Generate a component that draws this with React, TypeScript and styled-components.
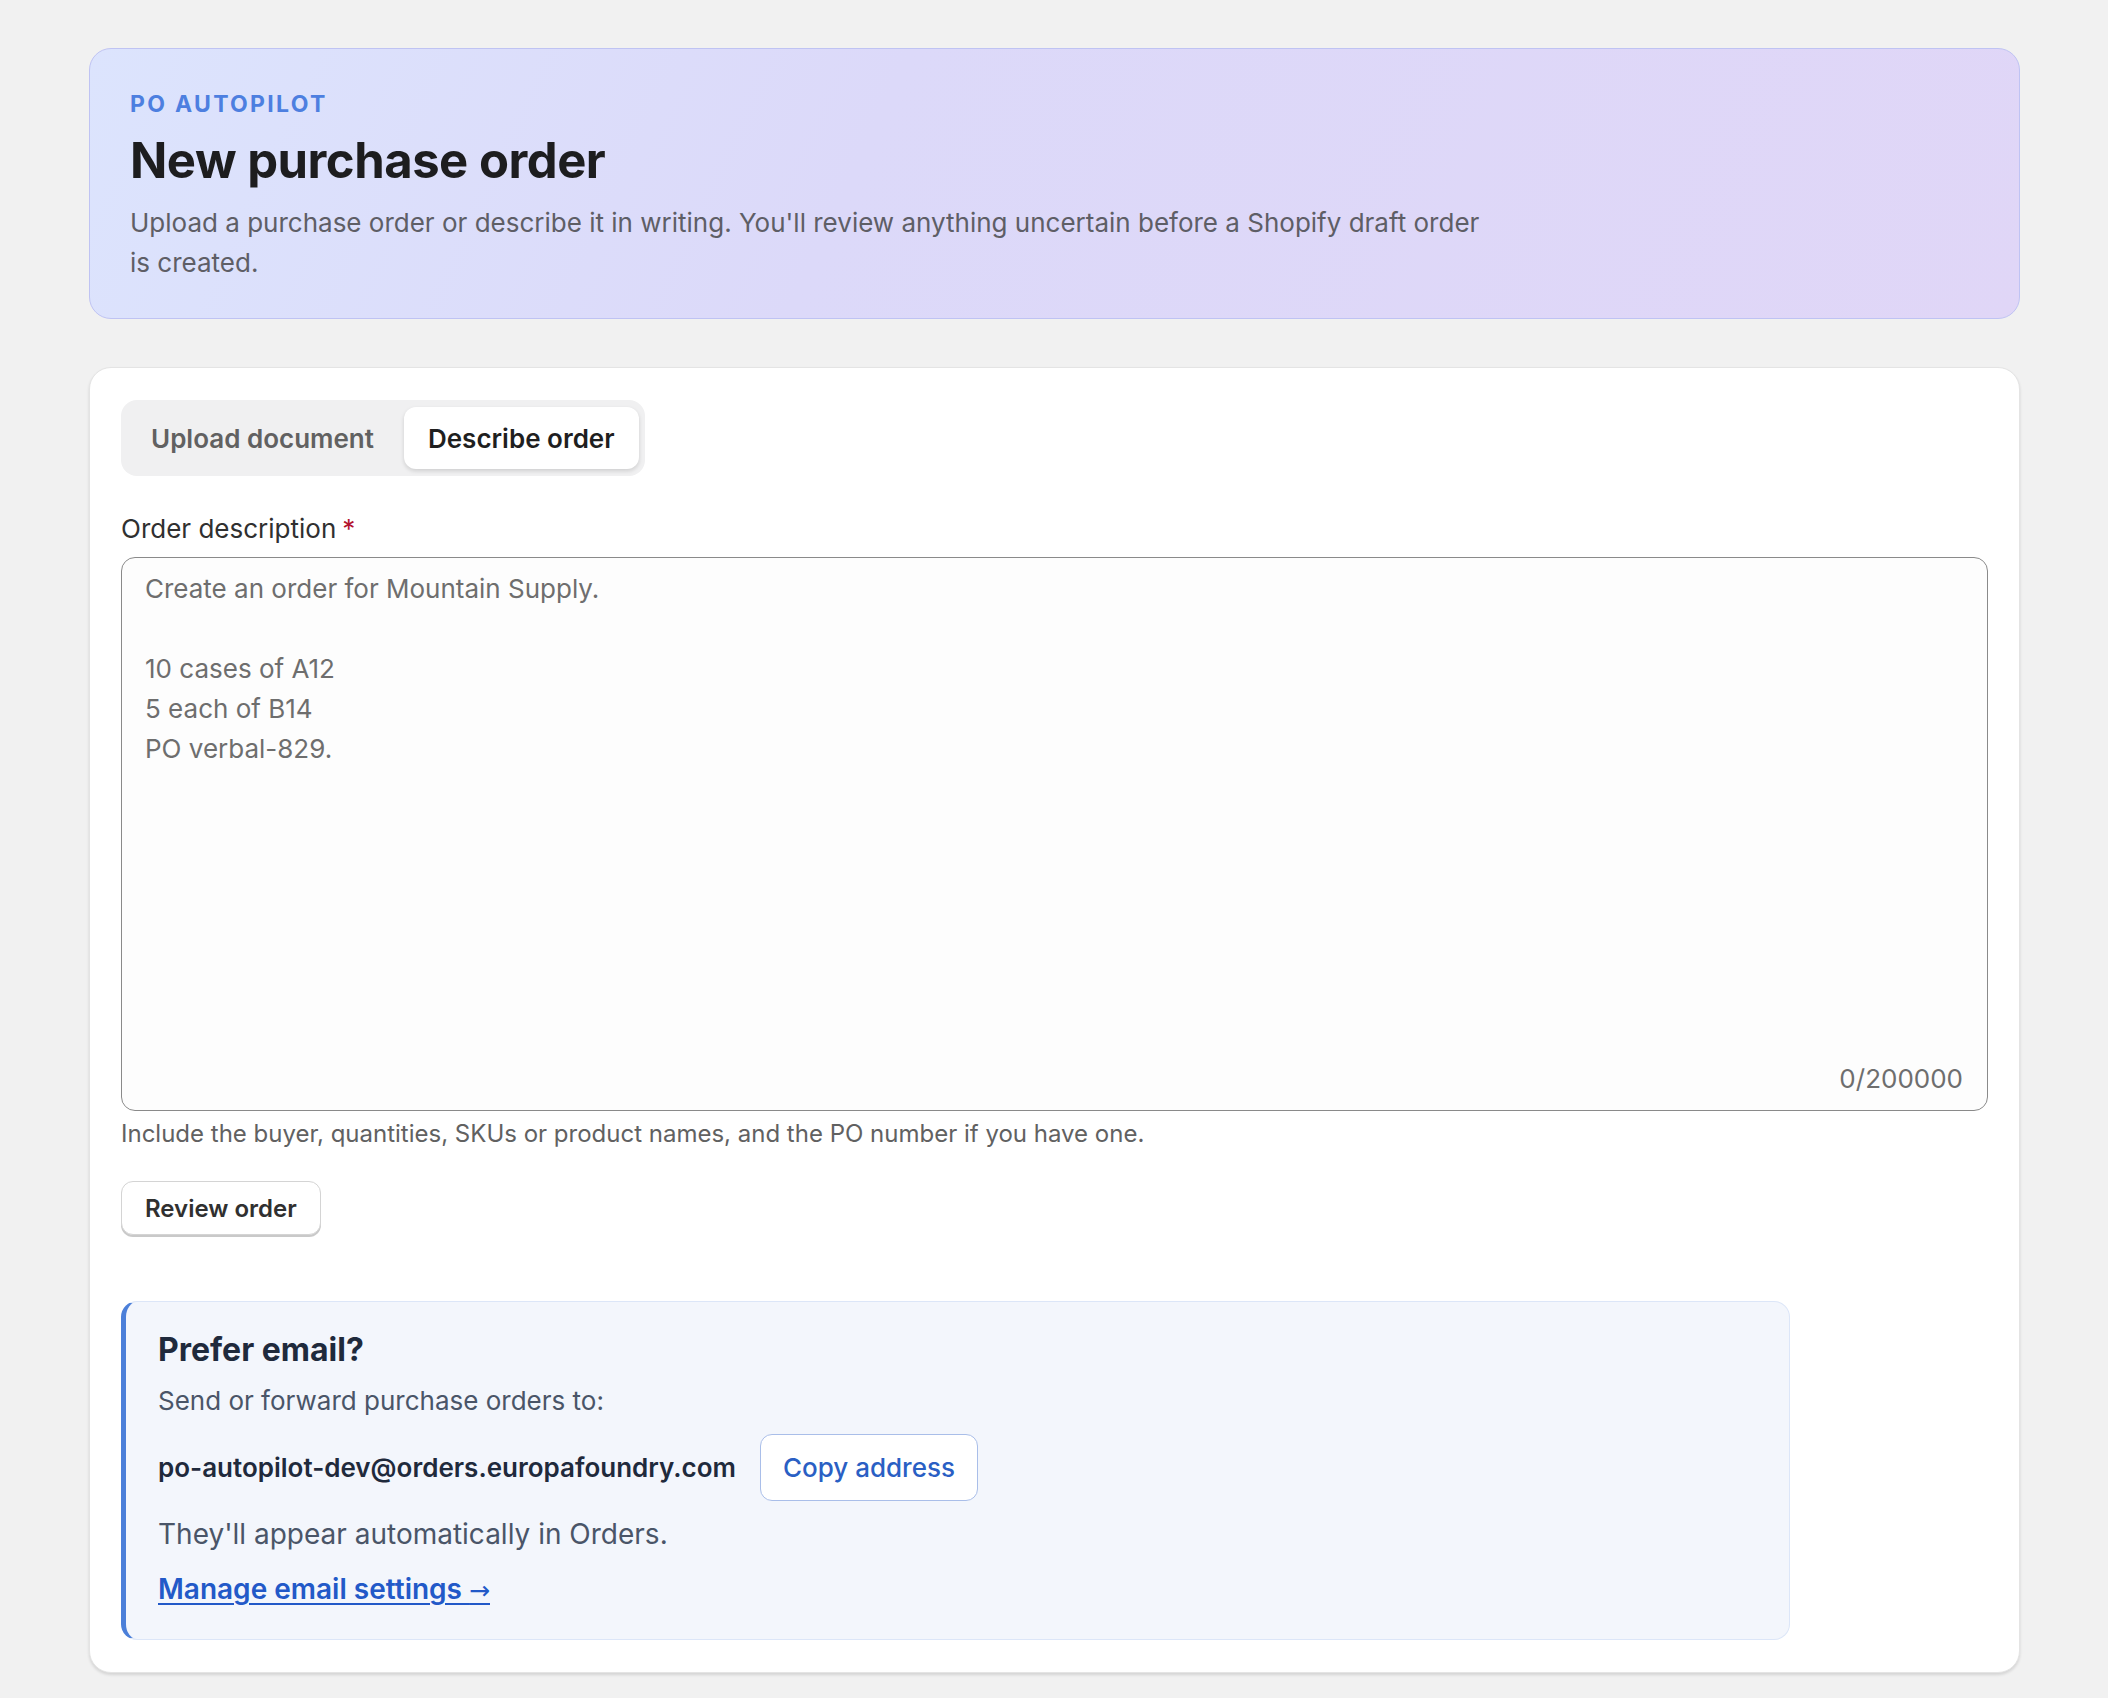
import styled, { createGlobalStyle } from "styled-components"

const GlobalStyle = createGlobalStyle`
  * { box-sizing: border-box; }
  html, body {
    margin: 0;
    padding: 0;
    background: #f1f1f1;
    font-family: Inter, "Noto Sans", "Liberation Sans", sans-serif;
    -webkit-font-smoothing: antialiased;
  }
`

const Page = styled.main`
  display: flex;
  flex-direction: column;
  gap: 48px;
  padding: 48px 88px 27px 89px;
`

const Hero = styled.header`
  border: 1.5px solid #bfc3f3;
  border-radius: 22px;
  background: linear-gradient(115deg, #dce4fd 0%, #dcd9f9 40%, #e0d6f7 100%);
  padding: 42px 40px 35px;
`

const Eyebrow = styled.div`
  font-size: 23px;
  line-height: 26px;
  font-weight: 700;
  letter-spacing: 0.1em;
  text-transform: uppercase;
  color: #4d7fe0;
`

const Title = styled.h1`
  margin: 15px 0 0;
  font-size: 49px;
  line-height: 58px;
  font-weight: 700;
  color: #1d1d1f;
  letter-spacing: -0.01em;
`

const Lead = styled.p`
  margin: 13px 0 0;
  max-width: 1365px;
  font-size: 26px;
  line-height: 40px;
  color: #5e5e66;
`

const Card = styled.section`
  background: #ffffff;
  border: 1.5px solid #e4e4e4;
  border-radius: 22px;
  box-shadow: 0 2px 3px rgba(0, 0, 0, 0.12);
  padding: 32px 31px 32px;
  display: flex;
  flex-direction: column;
  align-items: flex-start;
`

const Tabs = styled.div`
  display: flex;
  gap: 6px;
  padding: 7px 6px;
  background: #f0f0f1;
  border-radius: 16px;
`

const Tab = styled.button<{ $active?: boolean }>`
  border: none;
  font-family: inherit;
  font-size: 26px;
  font-weight: 600;
  height: 62px;
  padding: 0 24px;
  border-radius: 12px;
  cursor: pointer;
  background: ${(p) => (p.$active ? "#ffffff" : "transparent")};
  color: ${(p) => (p.$active ? "#1f1f1f" : "#616161")};
  box-shadow: ${(p) => (p.$active ? "0 2px 4px rgba(0,0,0,0.14)" : "none")};
`

const Field = styled.div`
  align-self: stretch;
  margin-top: 38px;
  display: flex;
  flex-direction: column;
`

const Label = styled.label`
  font-size: 26px;
  line-height: 30px;
  color: #303030;
  margin-bottom: 13px;
`

const Required = styled.span`
  color: #b3122e;
  margin-left: 6px;
`

const TextBox = styled.div`
  position: relative;
  height: 554px;
  border: 1.5px solid #8a8a8a;
  border-radius: 14px;
  background: #fdfdfd;
  overflow: hidden;
`

const TextArea = styled.textarea`
  width: 100%;
  height: 100%;
  border: none;
  outline: none;
  resize: none;
  background: transparent;
  font-family: inherit;
  font-size: 26px;
  line-height: 40px;
  padding: 11px 23px;
  color: #303030;
  &::placeholder {
    color: #6e6e6e;
  }
`

const Counter = styled.span`
  position: absolute;
  right: 24px;
  bottom: 15px;
  font-size: 26px;
  line-height: 32px;
  color: #6e6e6e;
`

const Help = styled.p`
  margin: 7px 0 0;
  font-size: 24px;
  line-height: 32px;
  color: #616161;
`

const SecondaryButton = styled.button`
  margin-top: 31px;
  height: 54px;
  padding: 0 23px;
  background: #ffffff;
  border: 1.5px solid #d4d4d4;
  border-radius: 12px;
  box-shadow: 0 2px 0 #c9c9c9;
  font-family: inherit;
  font-size: 24px;
  font-weight: 600;
  color: #303030;
  cursor: pointer;
`

const EmailPanel = styled.aside`
  margin-top: 66px;
  width: 1669px;
  max-width: 100%;
  background: #f3f6fc;
  border: 1.5px solid #dce6f8;
  border-left: 5px solid #4b7fd9;
  border-radius: 16px;
  padding: 29px 32px 30px;
  display: flex;
  flex-direction: column;
  align-items: flex-start;
`

const PanelTitle = styled.h2`
  margin: 0;
  font-size: 32px;
  line-height: 38px;
  font-weight: 700;
  color: #1f2a3c;
`

const PanelText = styled.p<{ $size?: number }>`
  margin: 0;
  font-size: ${(p) => p.$size ?? 26}px;
  line-height: 34px;
  color: #4a5568;
`

const AddressRow = styled.div`
  display: flex;
  align-items: center;
  gap: 24px;
  margin: 16px 0 16px;
`

const Address = styled.span`
  font-size: 26px;
  font-weight: 600;
  color: #1f2a3c;
`

const CopyButton = styled.button`
  height: 67px;
  padding: 0 22px;
  background: #ffffff;
  border: 1.5px solid #a9bee9;
  border-radius: 12px;
  font-family: inherit;
  font-size: 26px;
  font-weight: 500;
  color: #2a5fc4;
  cursor: pointer;
`

const SettingsLink = styled.a`
  margin-top: 20px;
  font-size: 28px;
  line-height: 36px;
  font-weight: 600;
  color: #2259c8;
  text-decoration: underline;
  text-underline-offset: 4px;
  text-decoration-thickness: 2px;
`

const Arrow = styled.span`
  font-weight: 400;
  font-family: "DejaVu Sans", sans-serif;
  font-size: 25px;
`

export default function App() {
  return (
    <>
      <GlobalStyle />
      <Page>
        <Hero>
          <Eyebrow>PO Autopilot</Eyebrow>
          <Title>New purchase order</Title>
          <Lead>
            Upload a purchase order or describe it in writing. You'll review anything uncertain
            before a Shopify draft order is created.
          </Lead>
        </Hero>

        <Card>
          <Tabs>
            <Tab>Upload document</Tab>
            <Tab $active>Describe order</Tab>
          </Tabs>

          <Field>
            <Label htmlFor="order-description">
              Order description<Required>*</Required>
            </Label>
            <TextBox>
              <TextArea
                id="order-description"
                placeholder={
                  "Create an order for Mountain Supply.\n\n10 cases of A12\n5 each of B14\nPO verbal-829."
                }
              />
              <Counter>0/200000</Counter>
            </TextBox>
            <Help>
              Include the buyer, quantities, SKUs or product names, and the PO number if you have
              one.
            </Help>
          </Field>

          <SecondaryButton>Review order</SecondaryButton>

          <EmailPanel>
            <PanelTitle>Prefer email?</PanelTitle>
            <PanelText style={{ marginTop: 15 }}>Send or forward purchase orders to:</PanelText>
            <AddressRow>
              <Address>po-autopilot-dev@orders.europafoundry.com</Address>
              <CopyButton>Copy address</CopyButton>
            </AddressRow>
            <PanelText $size={28}>They'll appear automatically in Orders.</PanelText>
            <SettingsLink href="#">
              Manage email settings <Arrow>→</Arrow>
            </SettingsLink>
          </EmailPanel>
        </Card>
      </Page>
    </>
  )
}
